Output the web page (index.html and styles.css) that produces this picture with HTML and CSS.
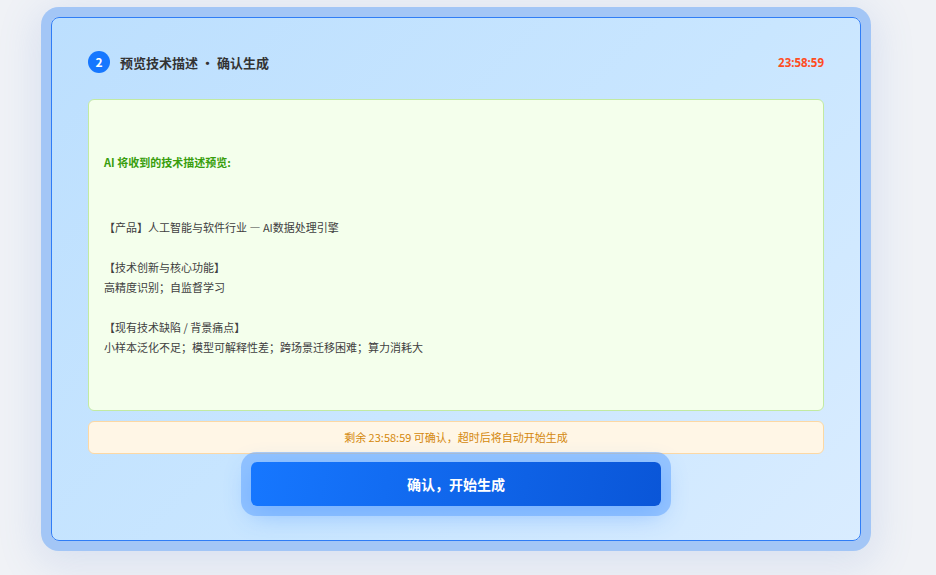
FILE: index.html
```html
<!DOCTYPE html>
<html lang="zh-CN">
<head>
    <meta charset="UTF-8">
    <meta name="viewport" content="width=device-width, initial-scale=1.0">
    <title>预览技术描述</title>
    <link rel="stylesheet" href="styles.css">
</head>
<body>
    <div class="card">
        <div class="card-header">
            <span class="step-badge">2</span>
            <h2 class="step-title">预览技术描述 • 确认生成</h2>
            <span class="timer">23:58:59</span>
        </div>

        <div class="preview-box">
            <div class="preview-title">AI 将收到的技术描述预览:</div>
            <div class="preview-text">【产品】人工智能与软件行业 — AI数据处理引擎

【技术创新与核心功能】
高精度识别；自监督学习

【现有技术缺陷 / 背景痛点】
小样本泛化不足；模型可解释性差；跨场景迁移困难；算力消耗大</div>
        </div>

        <div class="notice">剩余 23:58:59 可确认，超时后将自动开始生成</div>

        <div class="actions">
            <button type="button" class="confirm-btn">确认，开始生成</button>
        </div>
    </div>
</body>
</html>
```

FILE: styles.css
```css
html, body {
    min-height: 100%;
}
body {
    margin: 0;
    padding: 17px 0 34px 51px;
    background: #f0f2f6;
    font-family: "Noto Sans CJK SC", "Noto Sans", sans-serif;
}
.card {
    box-sizing: border-box;
    width: 810px;
    height: 524px;
    padding: 33px 36px 0;
    border: 1px solid #2f7df6;
    border-radius: 8px;
    background: linear-gradient(135deg, #bcdffe 0%, #c9e6ff 55%, #d9ecff 100%);
    box-shadow: 0 0 0 10px #a3c6f6, 0 8px 40px 14px rgba(90, 130, 210, 0.16);
}
.card-header {
    display: flex;
    align-items: center;
    height: 22px;
}
.step-badge {
    width: 22px;
    height: 22px;
    border-radius: 50%;
    background: #1677ff;
    color: #fff;
    font-size: 12px;
    font-weight: bold;
    line-height: 22px;
    text-align: center;
}
.step-title {
    margin: 0 0 0 10px;
    font-size: 13px;
    font-weight: bold;
    color: #333;
}
.timer {
    margin-left: auto;
    font-size: 11.5px;
    font-weight: bold;
    color: #ff4d1f;
    font-family: "Noto Sans", "DejaVu Sans", sans-serif;
}
.preview-box {
    box-sizing: border-box;
    height: 312px;
    margin-top: 26px;
    padding: 52px 15px 0;
    border: 1px solid #c2eaa2;
    border-radius: 6px;
    background: #f4ffec;
}
.preview-title {
    font-size: 11px;
    line-height: 20px;
    font-weight: bold;
    color: #389e0d;
}
.preview-text {
    margin-top: 45px;
    font-size: 11px;
    line-height: 20px;
    color: #404040;
    white-space: pre-wrap;
}
.notice {
    box-sizing: border-box;
    height: 33px;
    margin-top: 10px;
    border: 1px solid #fcd8a4;
    border-radius: 6px;
    background: #fff6e6;
    color: #d4880c;
    font-size: 11px;
    line-height: 31px;
    text-align: center;
}
.actions {
    display: flex;
    justify-content: center;
    margin-top: 8px;
}
.confirm-btn {
    width: 410px;
    height: 44px;
    border: none;
    border-radius: 6px;
    background: linear-gradient(100deg, #1677ff 0%, #0a56d8 100%);
    color: #fff;
    font-family: inherit;
    font-size: 14px;
    font-weight: bold;
    cursor: pointer;
    box-shadow: 0 0 0 10px rgba(100, 165, 255, 0.55), 0 8px 26px rgba(60, 140, 255, 0.45);
}
```
